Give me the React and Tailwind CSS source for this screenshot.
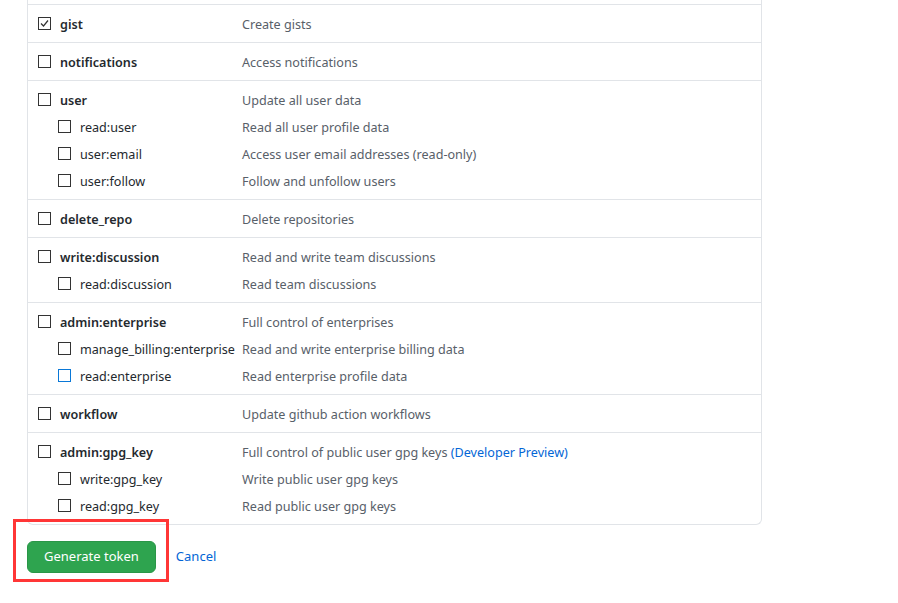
import React from 'react';

const scopes = [
    { name: 'gist', desc: 'Create gists', checked: true },
    { name: 'notifications', desc: 'Access notifications' },
    {
        name: 'user', desc: 'Update all user data', children: [
            { name: 'read:user', desc: 'Read all user profile data' },
            { name: 'user:email', desc: 'Access user email addresses (read-only)' },
            { name: 'user:follow', desc: 'Follow and unfollow users' },
        ]
    },
    { name: 'delete_repo', desc: 'Delete repositories' },
    {
        name: 'write:discussion', desc: 'Read and write team discussions', children: [
            { name: 'read:discussion', desc: 'Read team discussions' },
        ]
    },
    {
        name: 'admin:enterprise', desc: 'Full control of enterprises', children: [
            { name: 'manage_billing:enterprise', desc: 'Read and write enterprise billing data' },
            { name: 'read:enterprise', desc: 'Read enterprise profile data', focus: true },
        ]
    },
    { name: 'workflow', desc: 'Update github action workflows' },
    {
        name: 'admin:gpg_key', desc: 'Full control of public user gpg keys', preview: true, children: [
            { name: 'write:gpg_key', desc: 'Write public user gpg keys' },
            { name: 'read:gpg_key', desc: 'Read public user gpg keys' },
        ]
    },
];

const Checkbox = ({ checked, focus }) => (
    <span className={`w-[13px] h-[13px] border ${focus ? 'border-[#0a78d7]' : 'border-[#333]'} bg-white flex items-center justify-center shrink-0`}>
        {checked && (
            <svg width="11" height="11" viewBox="0 0 11 11">
                <polyline points="2,5.5 4.5,8 9,2.5" fill="none" stroke="#333" strokeWidth="1.2" />
            </svg>
        )}
    </span>
);

const Line = ({ item, sub }) => (
    <div className="flex items-center h-[20px]">
        <div className={`w-[204px] flex items-center ${sub ? 'pl-[20px]' : ''}`}>
            <Checkbox checked={item.checked} focus={item.focus} />
            <span className={`relative top-[1px] ml-[9px] ${sub ? 'text-[#24292e]' : 'font-semibold text-[#24292e]'}`}>{item.name}</span>
        </div>
        <div className="relative top-[1px] text-[#586069]">
            {item.desc}
            {item.preview && <span className="text-[#0366d6]"> (Developer Preview)</span>}
        </div>
    </div>
);

export default function App() {
    return (
        <div className="min-h-[603px] bg-white text-[12.6px] font-['Noto_Sans',sans-serif]">
            <div className="ml-[27px] w-[735px] border-x border-b border-[#e1e4e8] rounded-b-md">
                <div className="h-[4px]" />
                {scopes.map(s => (
                    <div key={s.name} className="border-t border-[#e1e4e8] pl-[10px] pt-[9px] pb-[8px] flex flex-col gap-[7px]">
                        <Line item={s} />
                        {s.children && s.children.map(c => <Line key={c.name} item={c} sub />)}
                    </div>
                ))}
            </div>
            <div className="ml-[27px] mt-[16px] flex items-center">
                <div className="relative">
                    <button className="h-[32px] px-[16px] rounded-md bg-[#2ea44f] border border-[#2a9647] text-white text-[13px]">
                        Generate token
                    </button>
                    <div className="absolute left-[-14px] top-[-22px] w-[156px] h-[63px] border-[3px] border-[#ff3636]" />
                </div>
                <a className="ml-[20px] text-[#0366d6] text-[13px]">Cancel</a>
            </div>
        </div>
    );
}
